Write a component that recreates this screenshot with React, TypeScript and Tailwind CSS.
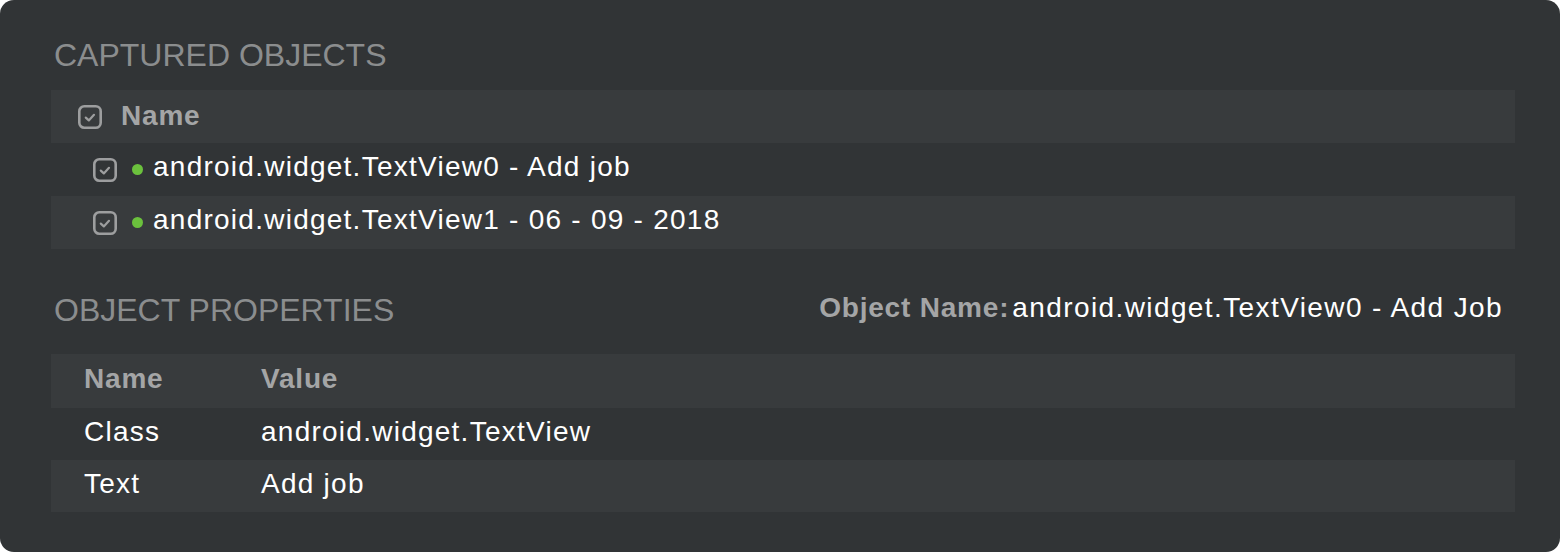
const FONT = { fontFamily: '"Liberation Sans", Arial, sans-serif' };

const CAPTURED = [
  "android.widget.TextView0 - Add job",
  "android.widget.TextView1 - 06 - 09 - 2018",
];

const PROPS = [
  { name: "Class", value: "android.widget.TextView" },
  { name: "Text", value: "Add job" },
];

function CheckBox() {
  return (
    <svg width="24" height="24" viewBox="0 0 24 24" fill="none" className="shrink-0 text-[#9d9e9f]">
      <rect x="1.3" y="1.3" width="21.4" height="21.4" rx="5" stroke="currentColor" strokeWidth="2.6" />
      <path d="M7.8 12.6l3 2.8 5.2-5.6" stroke="currentColor" strokeWidth="2.2" strokeLinecap="round" strokeLinejoin="round" />
    </svg>
  );
}

export default function App() {
  return (
    <div className="w-[1560px] h-[552px] bg-white" style={FONT}>
      <div className="h-full rounded-[14px] bg-[#313436] pt-[39px] pl-[51px] pr-[45px]">
        {/* Captured objects */}
        <div className="pl-[3px] text-[32px] leading-none text-[#8b8d8e]">CAPTURED OBJECTS</div>

        <div className="mt-[19px] flex flex-col">
          <div className="flex h-[53px] items-center gap-[19px] bg-[#383b3d] pl-[27px]">
            <CheckBox />
            <span className="pb-[2px] text-[28px] font-bold tracking-[0.8px] text-[#a4a5a6]">Name</span>
          </div>
          {CAPTURED.map((label, i) => (
            <div
              key={label}
              className={`flex h-[53px] items-center pl-[42px] ${i % 2 === 1 ? "bg-[#383b3d]" : ""}`}
            >
              <CheckBox />
              <span className="ml-[15px] h-[11px] w-[11px] rounded-full bg-[#6bc13d]" />
              <span className="ml-[10px] pb-[5px] text-[28px] tracking-[1.25px] text-white">{label}</span>
            </div>
          ))}
        </div>

        {/* Object properties */}
        <div className="mt-[45px] flex items-center justify-between pr-[12px]">
          <div className="pl-[3px] text-[32px] leading-none text-[#8b8d8e]">OBJECT PROPERTIES</div>
          <div className="pb-[4px] text-[28px] leading-none tracking-[0.8px]">
            <span className="font-bold text-[#a4a5a6]">Object Name:</span>
            <span className="ml-[3px] tracking-[1.4px] text-white">android.widget.TextView0 - Add Job</span>
          </div>
        </div>

        <div className="mt-[28px] flex flex-col">
          <div className="flex h-[54px] items-center bg-[#383b3d] pb-[5px] pl-[33px] text-[28px] font-bold tracking-[0.8px] text-[#a4a5a6]">
            <span className="w-[177px]">Name</span>
            <span>Value</span>
          </div>
          {PROPS.map((p, i) => (
            <div
              key={p.name}
              className={`flex h-[52px] items-center pb-[4px] pl-[33px] text-[28px] tracking-[1.25px] text-white ${i % 2 === 1 ? "bg-[#383b3d]" : ""}`}
            >
              <span className="w-[177px]">{p.name}</span>
              <span>{p.value}</span>
            </div>
          ))}
        </div>
      </div>
    </div>
  );
}
